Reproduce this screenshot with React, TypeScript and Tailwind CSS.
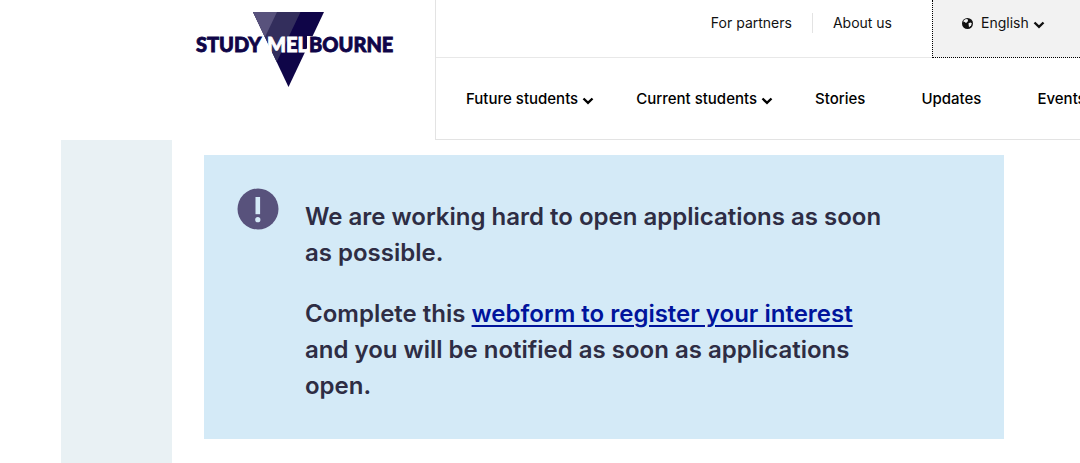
const topLinks = ["For partners", "About us"];

const navItems = [
  { label: "Future students", menu: true },
  { label: "Current students", menu: true },
  { label: "Stories", menu: false },
  { label: "Updates", menu: false },
  { label: "Events", menu: false },
];

function Chevron() {
  return (
    <svg viewBox="0 0 12 8" className="w-3 h-2 shrink-0" fill="none" aria-hidden="true">
      <path d="M1.500 1.500 6 5.800 10.500 1.500" stroke="currentColor" strokeWidth="2.4" />
    </svg>
  );
}

function Globe() {
  return (
    <svg viewBox="0 0 10 10" className="size-[11px] shrink-0" aria-hidden="true">
      <circle cx="5" cy="5" r="5" fill="currentColor" />
      <path d="M4.900.9 3 1.200 1.300 2.600l.3 1.200 1-.3.5.9.9.2.4-1 1.100-.7-.2-1z" fill="#f2f2f2" />
      <path d="m5.900 4.700 1.700-.6 1.300.7-.6 2-1.900 1.700-.3-1.800z" fill="#f2f2f2" />
    </svg>
  );
}

function Logo() {
  return (
    <svg viewBox="0 0 204 80" className="w-[204px] h-20" role="img" aria-label="Study Melbourne">
      <path d="M58 2h71L93.500 77z" fill="#0f0548" />
      <path d="M58 2h47.500L81.700 52z" fill="#332e5c" />
      <path d="M58 2h24L69.900 27.200z" fill="#58527c" />
      {/* Gaps that keep the wordmark clear of the triangle */}
      <path d="M60 26h8.500L67 30v5l4 8H60zM112 26h9v18h-9z" fill="#fff" />
      <g fontFamily="Lato, sans-serif" fontSize="20" fontWeight="900" strokeWidth="0.8">
        <text x="1" y="42" fill="#0f0548" stroke="#0f0548">STUDY</text>
        <text x="72" y="42" fill="#fff" stroke="#fff">MEL</text>
        <text x="114" y="42" fill="#0f0548" stroke="#0f0548">BOURNE</text>
      </g>
    </svg>
  );
}

export default function App() {
  return (
    <div className="min-h-screen flex flex-col overflow-hidden bg-white font-['Inter',sans-serif] text-[#111]">
      <header className="flex h-[140px]">
        <div className="w-[435px] shrink-0 pl-[195px] pt-[10px]">
          <a href="#" className="inline-block">
            <Logo />
          </a>
        </div>

        <div className="flex-1 min-w-0 flex flex-col border-l border-b border-[#e3e3e3]">
          {/* Top bar */}
          <div className="flex h-[58px] justify-end border-b border-[#e8e8e8] text-sm leading-5">
            <div className="flex items-start pt-[13px] pr-5">
              {topLinks.map((link, i) => (
                <a
                  key={link}
                  href="#"
                  className={`px-5 whitespace-nowrap ${i > 0 ? "border-l border-[#e3e3e3]" : ""}`}
                >
                  {link}
                </a>
              ))}
            </div>
            <button
              type="button"
              className="w-[148px] flex items-start gap-1 pl-[29px] pt-[13px] -mb-px bg-[#f2f2f2] border-l border-b border-dotted border-black"
            >
              <span className="flex items-center gap-2">
                <Globe />
                <span>English</span>
              </span>
              <span className="flex h-5 items-center pt-1">
                <Chevron />
              </span>
            </button>
          </div>

          {/* Main nav */}
          <nav className="flex-1 flex items-center gap-[42px] pl-[30px] overflow-hidden text-[15px] leading-5 font-medium text-black">
            {navItems.map((item) => (
              <a
                key={item.label}
                href="#"
                className={`flex items-center gap-1 whitespace-nowrap ${item.menu ? "" : "pr-[14px]"}`}
              >
                {item.label}
                {item.menu && (
                  <span className="pt-1">
                    <Chevron />
                  </span>
                )}
              </a>
            ))}
          </nav>
        </div>
      </header>

      <main className="flex-1 flex pl-[61px] pr-[76px] gap-8">
        <div className="w-[111px] shrink-0 bg-[#e9f1f4]" />
        <section className="flex-1 self-start mt-[15px] flex items-start bg-[#d4eaf7] pl-[33px] pr-[110px] pt-[33px] pb-[35px]">
          <svg viewBox="0 0 42 42" className="size-[42px] shrink-0" aria-hidden="true">
            <circle cx="21" cy="21" r="20.500" fill="#58527c" />
            <path d="M18.500 9h4.600v17.200h-4.600z" fill="#d4eaf7" />
            <circle cx="20.800" cy="31.700" r="2.600" fill="#d4eaf7" />
          </svg>
          <div className="ml-[26px] mt-[11px] space-y-[25px] text-2xl leading-9 font-semibold text-[#2e2d44]">
            <p>We are working hard to open applications as soon as possible.</p>
            <p>
              Complete this{" "}
              <a href="#" className="text-[#00149c] underline decoration-2 underline-offset-3">
                webform to register your interest
              </a>{" "}
              and you will be notified as soon as applications open.
            </p>
          </div>
        </section>
      </main>
    </div>
  );
}
